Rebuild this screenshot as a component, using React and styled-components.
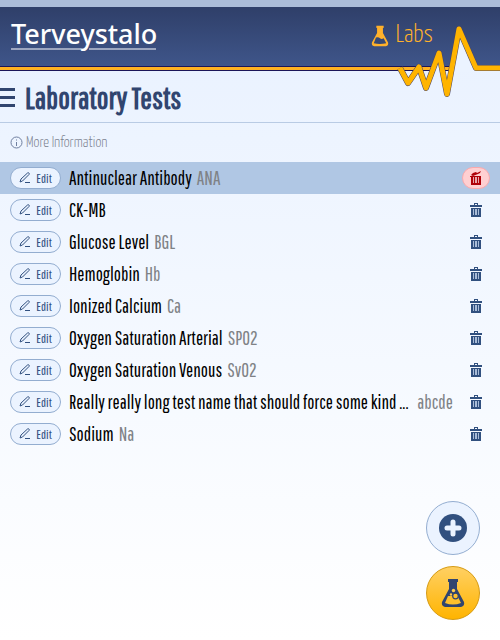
import React from 'react';
import styled, { createGlobalStyle } from 'styled-components';

const Global = createGlobalStyle`
  *, *::before, *::after { box-sizing: border-box; }
  body {
    margin: 0;
    min-height: 100vh;
    font-family: "Pathway Gothic One", "Yanone Kaffeesatz", "Liberation Sans", sans-serif;
    color: #000;
    background: linear-gradient(#e8f1ff, #ffffff) no-repeat #fff;
  }
  button { font-family: inherit; cursor: pointer; }
`;

const Header = styled.header`
  position: relative;
  display: flex;
  align-items: flex-start;
  justify-content: space-between;
  height: 71px;
  padding: 13px 67px 0 11px;
  background: linear-gradient(#2f3f69, #40578c);
  border-top: 7px solid #abbcd8;
  border-bottom: 1px solid #1c1659;
  &::after {
    content: "";
    position: absolute;
    left: 0;
    right: 0;
    bottom: 0;
    height: 4px;
    background: #ffb222;
    border-top: 1px solid #1c1659;
  }
`;
const Logo = styled.div`
  color: #fff;
  font: 500 27px/28px "Noto Sans", sans-serif;
`;
const LogoRule = styled.svg`
  display: block;
  width: 145px;
  height: 2px;
`;
const Section = styled.div`
  display: flex;
  align-items: center;
  gap: 7px;
  font: 300 25px/32px "Yanone Kaffeesatz", "Liberation Sans", sans-serif;
  color: #ffb12b;
`;
const Pulse = styled.svg`
  position: absolute;
  z-index: 1;
  top: 13px;
  right: 0;
  width: 104px;
  height: 80px;
`;
const TitleBar = styled.div`
  display: flex;
  align-items: center;
  gap: 10px;
  height: 52px;
  border-bottom: 1px solid #b9cbe4;
`;
const MenuButton = styled.button`
  padding: 0;
  border: 0;
  background: none;
  svg { display: block; }
`;
const Title = styled.h1`
  margin: 0;
  font-size: 31px;
  line-height: 32px;
  color: #31456f;
`;
const Info = styled.button`
  display: flex;
  align-items: center;
  gap: 3px;
  height: 39px;
  padding: 0 10px;
  border: 0;
  background: none;
  color: #7b828f;
  font: 300 15px/20px "Yanone Kaffeesatz", "Liberation Sans", sans-serif;
  svg { color: #6f7f9f; }
`;
const List = styled.ul`
  margin: 0;
  padding: 0;
  list-style: none;
`;
const Row = styled.li`
  display: flex;
  align-items: center;
  height: 32px;
  padding: 0 10px;
  background: ${(p) => (p.$active ? '#b0c7e4' : 'transparent')};
`;
const Edit = styled.button`
  display: flex;
  flex: none;
  align-items: center;
  justify-content: center;
  gap: 5px;
  width: 51px;
  height: 22px;
  margin-right: 8px;
  padding: 0;
  border: 1px solid #93add0;
  border-radius: 11px;
  background: #ebf3ff;
  color: #31507f;
  font-size: 13px;
`;
const Name = styled.span`
  flex: ${(p) => (p.$fill ? '1 1 0' : '0 1 auto')};
  min-width: 0;
  overflow: hidden;
  text-overflow: ellipsis;
  white-space: nowrap;
  font-size: 19px;
  line-height: 24px;
`;
const Code = styled.span`
  flex: none;
  margin: 0 9px 0 5px;
  font-size: 19px;
  line-height: 24px;
  color: #7f8286;
`;
const Remove = styled.button`
  display: flex;
  flex: none;
  align-items: center;
  justify-content: center;
  width: 28px;
  height: 22px;
  margin-left: auto;
  padding: 0;
  border: 1px solid ${(p) => (p.$active ? '#f9a9ad' : 'transparent')};
  border-radius: 11px;
  background: ${(p) => (p.$active ? '#ffcfd1' : 'transparent')};
  color: ${(p) => (p.$active ? '#b00008' : '#31507f')};
`;
const Actions = styled.div`
  position: fixed;
  right: 20px;
  bottom: 20px;
  display: grid;
  gap: 11px;
`;
const RoundButton = styled.button`
  display: grid;
  place-items: center;
  width: 54px;
  height: 54px;
  padding: 0;
  border: 1px solid ${(p) => (p.$gold ? '#d59a12' : '#93add0')};
  border-radius: 50%;
  background: ${(p) => (p.$gold ? 'linear-gradient(#ffd063, #ffb400)' : '#ebf3ff')};
  color: #31456f;
`;

const Flask = ({ width, height, bubbles }) => (
  <svg width={width} height={height} viewBox="0 0 24 30" aria-hidden="true">
    <path d="M7 1h10v3H7z" fill="currentColor" />
    <path d="M8 3v8L1 24q-1 4 3 5h16q4-1 3-5L16 11V3z" fill="currentColor" />
    {bubbles ? (
      <>
        <path d="M7 18L4 25q8 3 16 0L17 19q-3 3-6-1z" fill="#ffc02b" />
        <circle cx="12.500" cy="12.500" r="1.700" fill="#ffcb50" />
        <circle cx="10" cy="16.500" r="1.200" fill="#ffc84a" />
        <circle cx="14.500" cy="18" r="2.800" fill="#ffc02b" stroke="currentColor" strokeWidth="1.200" />
      </>
    ) : (
      <path d="M6.500 17L3.500 25q8 2 17 0L17 18q-3 2-5 0t-5.500-1z" fill="#364874" />
    )}
  </svg>
);

const Bin = ({ open }) => (
  <svg width="12" height="14" viewBox="0 0 12 14" fill="currentColor" aria-hidden="true">
    {open ? (
      <path d="M0 5h11v1H0zM1 4l2-2 3-1 1 1 4-2-1 2-2 1-5 2z" />
    ) : (
      <path d="M1 2h3V0h4v2h4v2H0V2zM5 1v1h2V1z" fillRule="evenodd" />
    )}
    <path d="M1 5h10v9H1z" />
    <path d="M3 6h1v6H3zM5 6h2v6H5zM8 6h1v6H8z" fill={open ? '#e8a5aa' : '#a9bcd8'} />
  </svg>
);

const tests = [
  { name: 'Antinuclear Antibody', code: 'ANA', active: true },
  { name: 'CK-MB' },
  { name: 'Glucose Level', code: 'BGL' },
  { name: 'Hemoglobin', code: 'Hb' },
  { name: 'Ionized Calcium', code: 'Ca' },
  { name: 'Oxygen Saturation Arterial', code: 'SPO2' },
  { name: 'Oxygen Saturation Venous', code: 'SvO2' },
  { name: 'Really really long test name that should force some kind ...', code: 'abcde', fill: true },
  { name: 'Sodium', code: 'Na' },
];

export default function App() {
  return (
    <>
      <Global />
      <Header>
        <Logo>
          Terveystalo
          <LogoRule viewBox="0 0 145 2" aria-hidden="true">
            <path d="M0 1h70M78 1h67" stroke="#fff" strokeWidth="1" />
          </LogoRule>
        </Logo>
        <Section>
          <Flask width={18} height={22} />
          Labs
        </Section>
        <Pulse viewBox="0 0 104 80" fill="none" aria-hidden="true">
          <path d="M4 48L12 63 23 47 30 68 43 33 51 74 63 9 80 48 104 48V52H4z" fill="#ebf3ff" />
          <path d="M4 48L12 63 23 47 30 68 43 33 51 74 63 9 80 48H104" stroke="#4b4565" strokeWidth="6" strokeLinejoin="round" />
          <path d="M4 48L12 63 23 47 30 68 43 33 51 74 63 9 80 48H104" stroke="#ffb400" strokeWidth="5" strokeLinejoin="round" />
        </Pulse>
      </Header>
      <main>
        <TitleBar>
          <MenuButton aria-label="Menu">
            <svg width="15" height="20" viewBox="0 0 15 20" fill="#31456f"><path d="M0 1h15v3H0zM0 9h15v3H0zM0 17h15v3H0z" /></svg>
          </MenuButton>
          <Title>Laboratory Tests</Title>
        </TitleBar>
        <Info>
          <svg width="13" height="13" viewBox="0 0 13 13" fill="none" stroke="currentColor" aria-hidden="true">
            <circle cx="6.500" cy="6.500" r="5.500" /><path d="M6.500 6v4M6.500 3.500v1" />
          </svg>
          More Information
        </Info>
        <List>
          {tests.map((t) => (
            <Row key={t.name} $active={t.active}>
              <Edit>
                <svg width="12" height="12" viewBox="0 0 12 12" fill="none" stroke="currentColor" aria-hidden="true">
                  <path d="M1 10l1-3L8.500 1q1-.5 1.500 0t0 1.500L3.500 9zM6 10.500h5" />
                </svg>
                Edit
              </Edit>
              <Name $fill={t.fill}>{t.name}</Name>
              {t.code && <Code>{t.code}</Code>}
              <Remove $active={t.active} aria-label={`Delete ${t.name}`}><Bin open={t.active} /></Remove>
            </Row>
          ))}
        </List>
      </main>
      <Actions>
        <RoundButton aria-label="Add">
          <svg width="28" height="28" viewBox="0 0 28 28" aria-hidden="true">
            <circle cx="14" cy="14" r="14" fill="#31507f" />
            <path d="M14 8v12M8 14h12" stroke="#ebf3ff" strokeWidth="5" strokeLinecap="round" />
          </svg>
        </RoundButton>
        <RoundButton $gold aria-label="Labs"><Flask width={24} height={30} bubbles /></RoundButton>
      </Actions>
    </>
  );
}
